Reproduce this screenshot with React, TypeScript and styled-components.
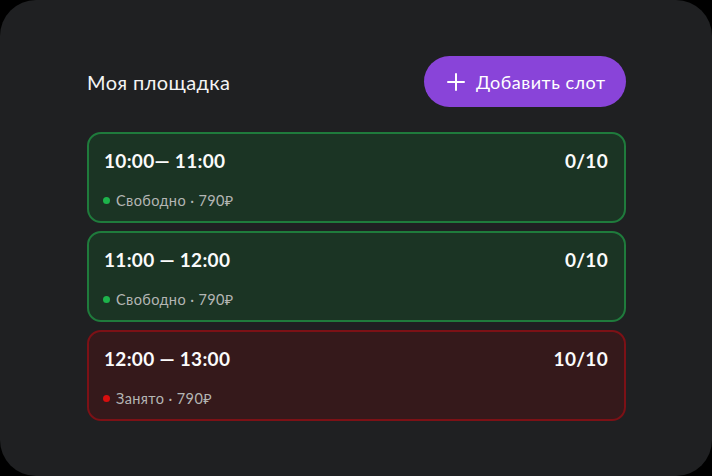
import React from 'react'
import styled, { createGlobalStyle } from 'styled-components'

const GlobalStyle = createGlobalStyle`
  html, body {
    margin: 0;
    padding: 0;
    background: #000;
  }
  body {
    font-family: 'Lato', 'Noto Sans', sans-serif;
  }
`

type SlotStatus = 'free' | 'busy'

const STATUS_COLORS: Record<SlotStatus, { bg: string; border: string; dot: string }> = {
  free: { bg: '#1b3424', border: '#1f7b3c', dot: '#1db34b' },
  busy: { bg: '#35191b', border: '#7c1116', dot: '#d80e0e' },
}

const Panel = styled.div`
  width: 712px;
  height: 476px;
  box-sizing: border-box;
  background: #1f2022;
  border-radius: 36px;
  padding: 56px 86px 0 87px;
`

const Header = styled.div`
  display: flex;
  align-items: center;
  justify-content: space-between;
  height: 51px;
  margin-bottom: 25px;
`

const Title = styled.h1`
  margin: 0;
  font-size: 20px;
  font-weight: 400;
  color: #f4f4f4;
  letter-spacing: 0.4px;
`

const AddButton = styled.button`
  display: flex;
  align-items: center;
  gap: 11px;
  height: 51px;
  width: 202px;
  padding: 0 0 0 23px;
  border: none;
  border-radius: 26px;
  background: #8944d9;
  color: #fff;
  font-family: inherit;
  font-size: 18px;
  font-weight: 400;
  letter-spacing: 0.5px;
  cursor: pointer;
`

const SlotList = styled.div`
  display: flex;
  flex-direction: column;
  gap: 8px;
`

const Card = styled.div<{ $status: SlotStatus }>`
  height: 91px;
  box-sizing: border-box;
  border-radius: 14px;
  border: 2px solid ${(props) => STATUS_COLORS[props.$status].border};
  background: ${(props) => STATUS_COLORS[props.$status].bg};
  padding: 15px 16px 0 15px;
  display: flex;
  flex-direction: column;
  gap: 17px;
`

const CardTop = styled.div`
  display: flex;
  justify-content: space-between;
  align-items: center;
`

const Time = styled.span`
  font-size: 19px;
  font-weight: 700;
  color: #fbfbfb;
  line-height: 24px;
  letter-spacing: 0.3px;
`

const StatusLine = styled.div`
  display: flex;
  align-items: center;
  gap: 6px;
  font-size: 14.5px;
  color: #b4b6b4;
  letter-spacing: 0.4px;
  margin-left: -1px;
`

const Dot = styled.span<{ $status: SlotStatus }>`
  width: 7px;
  height: 7px;
  border-radius: 50%;
  background: ${(props) => STATUS_COLORS[props.$status].dot};
`

const slots: { time: string; count: string; status: SlotStatus; label: string }[] = [
  { time: '10:00— 11:00', count: '0/10', status: 'free', label: 'Свободно' },
  { time: '11:00 — 12:00', count: '0/10', status: 'free', label: 'Свободно' },
  { time: '12:00 — 13:00', count: '10/10', status: 'busy', label: 'Занято' },
]

const PlusIcon = () => (
  <svg width="18" height="18" viewBox="0 0 18 18" fill="none">
    <path d="M9 1v16M1 9h16" stroke="#fff" strokeWidth="2" strokeLinecap="round" />
  </svg>
)

export default function App() {
  return (
    <>
      <GlobalStyle />
      <Panel>
        <Header>
          <Title>Моя площадка</Title>
          <AddButton>
            <PlusIcon />
            Добавить слот
          </AddButton>
        </Header>
        <SlotList>
          {slots.map((slot) => (
            <Card key={slot.time} $status={slot.status}>
              <CardTop>
                <Time>{slot.time}</Time>
                <Time>{slot.count}</Time>
              </CardTop>
              <StatusLine>
                <Dot $status={slot.status} />
                {slot.label} · 790₽
              </StatusLine>
            </Card>
          ))}
        </SlotList>
      </Panel>
    </>
  )
}
